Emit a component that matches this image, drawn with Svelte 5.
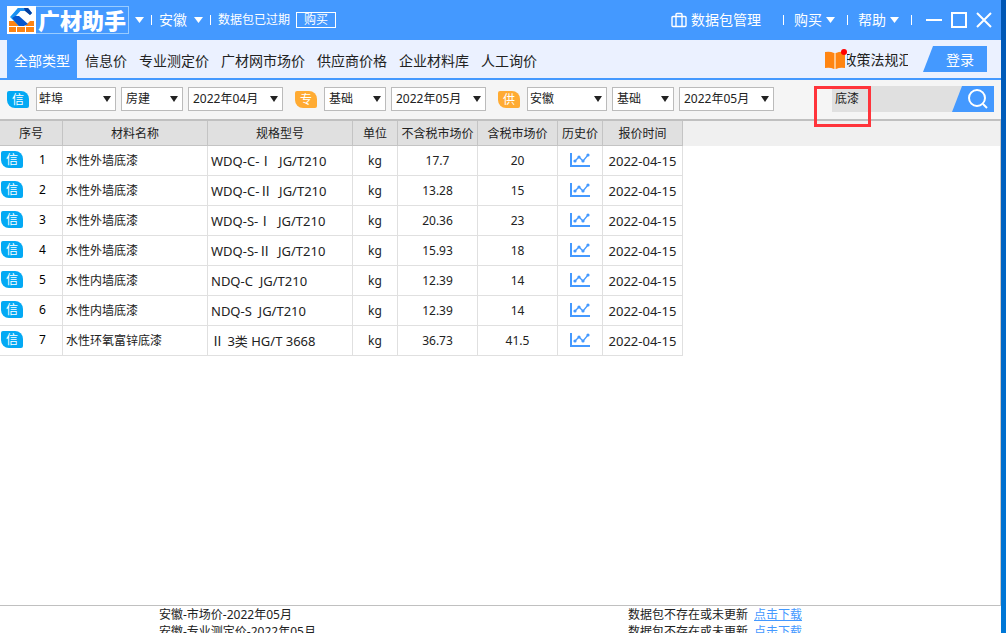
<script>
  const tabs = ['全部类型', '信息价', '专业测定价', '广材网市场价', '供应商价格', '企业材料库', '人工询价']
  let active = $state('全部类型')
  let keyword = $state('底漆')

  const filters = [
    { badge: '信', color: 'blue', selects: [['地区', '蚌埠', 'lg'], ['专业', '房建', 'sm'], ['期数', '2022年04月', 'date']] },
    { badge: '专', color: 'orange', selects: [['类型', '基础', 'sm'], ['期数', '2022年05月', 'date']] },
    { badge: '供', color: 'orange', selects: [['地区', '安徽', 'lg'], ['类型', '基础', 'sm'], ['期数', '2022年05月', 'date']] }
  ]

  const rows = [
    ['水性外墙底漆', 'WDQ-C-Ⅰ  JG/T210', '17.7', '20'],
    ['水性外墙底漆', 'WDQ-C-Ⅱ  JG/T210', '13.28', '15'],
    ['水性外墙底漆', 'WDQ-S-Ⅰ  JG/T210', '20.36', '23'],
    ['水性外墙底漆', 'WDQ-S-Ⅱ  JG/T210', '15.93', '18'],
    ['水性内墙底漆', 'NDQ-C  JG/T210', '12.39', '14'],
    ['水性内墙底漆', 'NDQ-S  JG/T210', '12.39', '14'],
    ['水性环氧富锌底漆', 'Ⅱ 3类 HG/T 3668', '36.73', '41.5']
  ]

  const packages = ['安徽-市场价-2022年05月', '安徽-专业测定价-2022年05月']
</script>

<div class="screen">
  <div class="window">
    <header class="titlebar">
      <div class="logo">
        <svg width="29" height="28" viewBox="0 0 29 28">
          <rect width="29" height="28" fill="#fff" />
          <path d="M2 15h25v5H2zM2 21h7v5H2zM10 21h8v5h-8zM19 21h8v5h-8z" fill="#ff8412" />
          <path d="M8 15l6 6h3l6-6-5-9h-5l-5 5z" fill="#fff" />
          <path d="M11 2h5l-7 8 8 9-5 1-9-9z" fill="#1ba0fa" />
          <path d="M8 10h4l9 8-4 2h-5l-7-8z" fill="#0757cf" />
          <path d="M11 2h10l4 5-2 2-4-4h-6l-5 5-4 1z" fill="#1d8ff0" />
          <path d="M17 2h4l4 5-2 2-5-4z" fill="#063f9f" />
        </svg>
        <b>广材助手</b>
      </div>
      <button class="caret" aria-label="菜单"></button>
      <i class="sep"></i>
      <button class="menu">安徽<span class="caret"></span></button>
      <i class="sep"></i>
      <span class="expired">数据包已过期</span>
      <button class="buy">购买</button>

      <div class="actions">
        <button class="menu manage">
          <svg width="16" height="16" viewBox="0 0 16 16" fill="none" stroke="#fff" stroke-width="1.4">
            <rect x="1" y="4.5" width="14" height="10" rx="1" />
            <path d="M5 14.5V2.5a1 1 0 0 1 1-1h4a1 1 0 0 1 1 1v12" />
          </svg>
          数据包管理
        </button>
        <i class="sep"></i>
        <button class="menu">购买<span class="caret"></span></button>
        <i class="sep"></i>
        <button class="menu">帮助<span class="caret"></span></button>
        <i class="sep"></i>
        <div class="controls">
          <button aria-label="最小化"><svg width="16" height="16"><path d="M0 8h16" /></svg></button>
          <button aria-label="最大化"><svg width="16" height="16"><rect x="1" y="1" width="14" height="14" /></svg></button>
          <button aria-label="关闭"><svg width="16" height="16"><path d="M1 1l14 14M15 1L1 15" /></svg></button>
        </div>
      </div>
    </header>

    <nav>
      {#each tabs as tab}
        <button class="tab" class:active={tab === active} onclick={() => (active = tab)}>{tab}</button>
      {/each}
      <a class="policy" href="#policy">
        <svg width="22" height="22" viewBox="0 0 22 22">
          <path d="M0 4q5-1 9 1v16q-4-2-9-1zM11 5q4-2 9-1v16q-5-1-9 1z" fill="#ff8512" />
          <path d="M9 5h2v16H9z" fill="#ffc58a" />
          <circle cx="19" cy="4" r="3" fill="#f00" />
        </svg>
        <span class="clip"><span>政策法规汇</span></span>
      </a>
      <button class="login">登录</button>
    </nav>

    <div class="filters">
      {#each filters as group}
        <div class="group">
          <span class="badge {group.color}">{group.badge}</span>
          {#each group.selects as [name, value, size]}
            <label class="select {size}">
              <select aria-label={name}><option>{value}</option></select>
            </label>
          {/each}
        </div>
      {/each}
      <form class="search" onsubmit={(e) => e.preventDefault()}>
        <input type="text" aria-label="搜索" bind:value={keyword} />
        <button aria-label="查询">
          <svg width="22" height="22" viewBox="0 0 22 22" fill="none" stroke="#fff" stroke-width="2">
            <circle cx="10" cy="10" r="8" />
            <path d="M16 16l4 4" />
          </svg>
        </button>
        <div class="mark"></div>
      </form>
    </div>

    <main>
      <table>
        <thead>
          <tr>
            <th class="no">序号</th>
            <th class="name">材料名称</th>
            <th class="name">规格型号</th>
            <th class="unit">单位</th>
            <th class="price">不含税市场价</th>
            <th class="price">含税市场价</th>
            <th class="unit">历史价</th>
            <th class="price">报价时间</th>
            <td class="rest"></td>
          </tr>
        </thead>
        <tbody>
          {#each rows as [name, spec, net, gross], i}
            <tr>
              <td><div class="index"><span class="badge blue">信</span><span>{i + 1}</span></div></td>
              <td class="left">{name}</td>
              <td class="left code">{spec}</td>
              <td>kg</td>
              <td>{net}</td>
              <td>{gross}</td>
              <td>
                <button class="chart" aria-label="历史价">
                  <svg width="20" height="16" viewBox="0 0 20 16" fill="none" stroke="#49f">
                    <path d="M1 1v13h19" stroke-width="2" />
                    <path d="M5 9l4-4 4 4 5-6" stroke-width="1.3" />
                    <g fill="#49f" stroke="none">
                      <circle cx="5" cy="9" r="1.6" />
                      <circle cx="9" cy="5" r="1.6" />
                      <circle cx="13" cy="9" r="1.6" />
                      <circle cx="18" cy="3" r="1.6" />
                    </g>
                  </svg>
                </button>
              </td>
              <td class="code">2022-04-15</td>
              <td class="rest"></td>
            </tr>
          {/each}
        </tbody>
      </table>
    </main>

    <footer>
      {#each packages as item}
        <div class="package">
          <span>{item}</span>
          <span>数据包不存在或未更新<a href="#download">点击下载</a></span>
        </div>
      {/each}
    </footer>
  </div>
  <div class="desktop"></div>
</div>

<style>
  :global(body) {
    margin: 0;
  }

  .screen {
    display: flex;
    height: 100vh;
    overflow: hidden;
    font: 12px/16px 'Noto Sans', 'Noto Sans CJK SC', sans-serif;
    color: #222;
  }
  .window {
    flex: 1;
    min-width: 0;
    display: flex;
    flex-direction: column;
    background: #fff;
  }
  .desktop {
    width: 5px;
    background: linear-gradient(#0056b4, #0078d7);
  }

  button, input, select {
    font: inherit;
    color: inherit;
    border: 0;
    padding: 0;
    margin: 0;
    background: none;
    border-radius: 0;
  }
  button {
    cursor: pointer;
    white-space: nowrap;
  }
  svg {
    display: block;
    flex: none;
  }

  .titlebar {
    flex: none;
    display: flex;
    align-items: center;
    height: 40px;
    padding: 0 9px 0 7px;
    background: #49f;
    color: #fff;
  }
  .logo {
    display: flex;
    align-items: center;
    box-sizing: border-box;
    width: 122px;
    height: 28px;
    margin-right: 6px;
    box-shadow: inset 0 0 0 1px #9cf;
  }
  .logo b {
    margin-left: 2px;
    padding-bottom: 2px;
    font-size: 22px;
    line-height: 26px;
    font-weight: 900;
    font-family: 'Noto Sans CJK SC', sans-serif;
  }
  .caret {
    width: 9px;
    height: 6px;
    background: #fff;
    clip-path: polygon(0 0, 100% 0, 50% 100%);
  }
  .sep {
    width: 1px;
    height: 10px;
    margin: 0 7px;
    background: #fff;
  }
  .menu {
    display: flex;
    align-items: center;
    gap: 4px;
    font-size: 14px;
    line-height: 20px;
  }
  .titlebar > .menu {
    gap: 7px;
  }
  .expired {
    margin-right: 6px;
  }
  .buy {
    width: 40px;
    height: 16px;
    border: 1px solid #fff;
    line-height: 14px;
  }
  .actions {
    display: flex;
    align-items: center;
    margin-left: auto;
  }
  .actions .sep {
    margin: 0 10px 0 12px;
  }
  .actions .manage {
    margin-right: 10px;
  }
  .controls {
    display: flex;
    gap: 9px;
    margin-left: 4px;
  }
  .controls svg {
    fill: none;
    stroke: #fff;
    stroke-width: 2;
  }

  nav {
    flex: none;
    display: flex;
    align-items: center;
    height: 38px;
    padding: 0 14px 0 7px;
    background: #ebf1ff;
    border-bottom: 2px solid #49f;
    font-size: 14px;
    line-height: 20px;
  }
  .tab {
    height: 38px;
    padding: 4px 6px 0;
  }
  .tab.active {
    padding: 4px 7px 0;
    margin-right: 2px;
    background: #49f;
    color: #fff;
  }
  .policy {
    display: flex;
    align-items: center;
    margin-left: auto;
    margin-right: 15px;
    color: inherit;
    text-decoration: none;
  }
  .clip {
    display: flex;
    justify-content: center;
    width: 61px;
    padding-top: 2px;
    overflow: hidden;
    white-space: nowrap;
  }
  .login {
    width: 64px;
    height: 26px;
    padding: 2px 0 0 10px;
    background: #49f;
    color: #fff;
    clip-path: polygon(10px 0, 100% 0, 100% 100%, 0 100%);
  }

  .filters {
    flex: none;
    display: flex;
    align-items: center;
    gap: 12px;
    height: 38px;
    padding: 0 7px 1px;
    background: #f5f5f5;
    border-bottom: 2px solid #c0c0c0;
  }
  .group {
    display: flex;
    align-items: center;
    gap: 5px;
  }
  .badge {
    flex: none;
    width: 22px;
    height: 17px;
    line-height: 17px;
    text-align: center;
    color: #fff;
    border-radius: 2px 8px 2px 8px;
  }
  .group .badge {
    margin-right: 2px;
  }
  .blue {
    background: #03a9f4;
  }
  .orange {
    background: #ffab33;
  }
  .select {
    position: relative;
    display: block;
  }
  .select::after {
    content: '';
    position: absolute;
    top: 9px;
    right: 5px;
    width: 8px;
    height: 6px;
    background: #222;
    clip-path: polygon(0 0, 100% 0, 50% 100%);
    pointer-events: none;
  }
  .select select {
    display: block;
    appearance: none;
    box-sizing: border-box;
    width: 100%;
    height: 24px;
    padding-left: 4px;
    border: 1px solid #bbb;
    background: #fff;
  }
  .lg {
    width: 80px;
  }
  .select.lg select {
    padding-left: 2px;
  }
  .sm {
    width: 62px;
  }
  .date {
    width: 95px;
  }

  .search {
    position: relative;
    display: flex;
    width: 162px;
    height: 26px;
    margin-left: auto;
    background: #e0e0e0;
  }
  .search input {
    flex: 1;
    min-width: 0;
    padding-left: 3px;
    outline: 0;
  }
  .search button {
    display: flex;
    align-items: center;
    justify-content: center;
    width: 42px;
    padding-left: 10px;
    background: #49f;
    clip-path: polygon(10px 0, 100% 0, 100% 100%, 0 100%);
  }
  /* highlight box round the keyword */
  .mark {
    position: absolute;
    top: 0;
    left: -18px;
    box-sizing: border-box;
    width: 57px;
    height: 41px;
    border: 3px solid #ff343b;
    pointer-events: none;
  }

  main {
    flex: 1;
    min-height: 0;
    overflow: hidden;
    border-right: 1px solid #c8c8c8;
    border-bottom: 1px solid #c0c0c0;
  }
  table {
    width: 100%;
    table-layout: fixed;
    border-collapse: separate;
    border-spacing: 0;
  }
  th, td {
    box-sizing: border-box;
    height: 30px;
    padding: 0;
    border-right: 1px solid #e0e0e0;
    border-bottom: 1px solid #e0e0e0;
    text-align: center;
    font-weight: 400;
    white-space: pre;
  }
  th {
    height: 25px;
    padding-top: 2px;
    background: #e0e0e0;
    border-color: #c4c4c4;
  }
  .no {
    width: 63px;
  }
  .name {
    width: 145px;
  }
  .unit {
    width: 45px;
  }
  .price {
    width: 80px;
  }
  .rest {
    border: 0;
  }
  thead .rest {
    height: 25px;
    background: #f0f0f0;
  }
  .left {
    padding-left: 3px;
    text-align: left;
  }
  .code {
    font-size: 13px;
  }
  .index {
    display: flex;
    align-items: center;
    padding: 0 0 2px 1px;
    color: #000;
  }
  .index span:last-child {
    flex: 1;
  }
  .chart {
    display: block;
    margin: 0 auto;
    padding-bottom: 2px;
  }

  footer {
    flex: none;
    height: 27px;
    overflow: hidden;
  }
  .package {
    display: grid;
    grid-template-columns: 469px 1fr;
    padding-left: 159px;
    line-height: 17px;
  }
  .package a {
    margin-left: 6px;
    color: #49f;
  }
</style>
